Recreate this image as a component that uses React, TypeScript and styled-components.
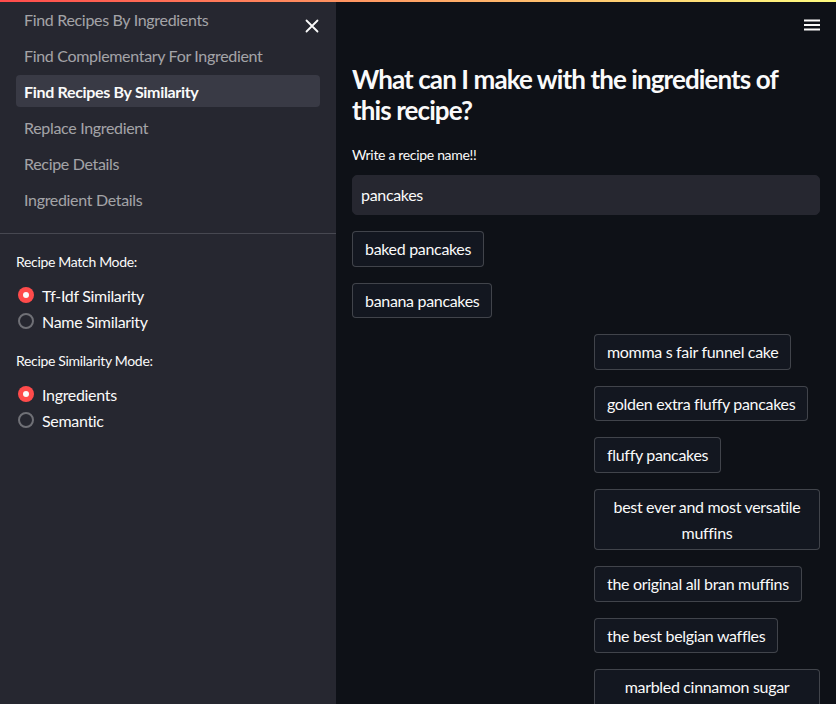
import React from "react";
import styled, { createGlobalStyle } from "styled-components";

const GlobalStyle = createGlobalStyle`
  html, body {
    margin: 0;
    padding: 0;
    background: #0e1117;
    font-family: "Source Sans Pro", Lato, "Noto Sans", sans-serif;
    letter-spacing: -0.02em;
    color: #fafafa;
  }
  * { box-sizing: border-box; }
`;

const Shell = styled.div`
  position: relative;
  height: 100vh;
  display: grid;
  grid-template-columns: 336px 1fr;
  overflow: hidden;
`;

const Decoration = styled.div`
  position: absolute;
  top: 0;
  left: 0;
  right: 0;
  height: 2px;
  background: linear-gradient(90deg, rgb(255, 75, 75), rgb(255, 253, 128));
  z-index: 5;
`;

const Sidebar = styled.aside`
  position: relative;
  background: #262730;
  height: 100%;
`;

const CloseButton = styled.button`
  position: absolute;
  top: 18px;
  right: 16px;
  width: 16px;
  height: 16px;
  padding: 0;
  border: none;
  background: none;
  color: #fafafa;
  display: flex;
  align-items: center;
  justify-content: center;
`;

const Nav = styled.nav`
  display: flex;
  flex-direction: column;
  gap: 4px;
  padding: 3px 16px 18px;
  border-bottom: 1px solid #474851;
`;

const NavItem = styled.a<{ active?: boolean }>`
  display: flex;
  align-items: center;
  height: 32px;
  padding: 0 8px;
  border-radius: 4px;
  font-size: 16px;
  font-weight: ${({ active }) => (active ? 700 : 400)};
  color: ${({ active }) => (active ? "#fafafa" : "rgba(250, 250, 250, 0.6)")};
  background: ${({ active }) => (active ? "#393a45" : "transparent")};
  text-decoration: none;
`;

const SideBody = styled.div`
  padding: 17px 16px 0;
`;

const GroupLabel = styled.div`
  font-size: 14px;
  line-height: 21px;
  margin-bottom: 10px;
`;

const RadioGroup = styled.div`
  display: flex;
  flex-direction: column;
  margin-bottom: 16px;
`;

const RadioRow = styled.label`
  display: flex;
  align-items: center;
  gap: 8px;
  height: 26px;
  font-size: 16px;
  padding-left: 2px;
`;

const RadioDot = styled.span<{ checked?: boolean }>`
  width: 16px;
  height: 16px;
  border-radius: 50%;
  flex: none;
  display: flex;
  align-items: center;
  justify-content: center;
  background: ${({ checked }) => (checked ? "#ff4b4b" : "transparent")};
  border: ${({ checked }) =>
    checked ? "none" : "2px solid rgba(250, 250, 250, 0.35)"};

  &::after {
    content: "";
    display: ${({ checked }) => (checked ? "block" : "none")};
    width: 6px;
    height: 6px;
    border-radius: 50%;
    background: #fafafa;
  }
`;

const Main = styled.main`
  position: relative;
  height: 100%;
  overflow: hidden;
  padding: 64px 16px 0;
`;

const MenuButton = styled.button`
  position: absolute;
  top: 17px;
  right: 16px;
  width: 16px;
  height: 16px;
  padding: 0;
  border: none;
  background: none;
  color: #fafafa;
`;

const Heading = styled.h3`
  margin: 0 0 18px;
  font-size: 26px;
  line-height: 31px;
  font-weight: 700;
  letter-spacing: -0.035em;
`;

const FieldLabel = styled.label`
  display: block;
  font-size: 14px;
  line-height: 21px;
  margin-bottom: 10px;
`;

const TextInput = styled.input`
  display: block;
  width: 100%;
  height: 40px;
  padding: 0 8px 2px;
  border: 1px solid #262730;
  border-radius: 5px;
  background: #262730;
  color: #fafafa;
  font-family: inherit;
  letter-spacing: inherit;
  font-size: 16px;
  outline: none;
  margin-bottom: 16px;
`;

const Stack = styled.div`
  display: flex;
  flex-direction: column;
  align-items: flex-start;
  gap: 16px;
`;

const Columns = styled.div`
  display: grid;
  grid-template-columns: 1fr 1fr;
  gap: 16px;
  margin-top: 16px;
`;

const ResultButton = styled.button`
  max-width: 100%;
  padding: 4px 12px;
  border: 1px solid rgba(250, 250, 250, 0.2);
  border-radius: 4px;
  background: rgb(19, 23, 32);
  color: #fafafa;
  font-family: inherit;
  letter-spacing: inherit;
  font-size: 16px;
  line-height: 1.6;
  text-align: center;
`;

const navItems = [
  "Find Recipes By Ingredients",
  "Find Complementary For Ingredient",
  "Find Recipes By Similarity",
  "Replace Ingredient",
  "Recipe Details",
  "Ingredient Details",
];

const topResults = ["baked pancakes", "banana pancakes"];

const columnResults = [
  "momma s fair funnel cake",
  "golden extra fluffy pancakes",
  "fluffy pancakes",
  "best ever and most versatile muffins",
  "the original all bran muffins",
  "the best belgian waffles",
  "marbled cinnamon sugar pancakes",
];

const Radio = ({ label, checked }: { label: string; checked?: boolean }) => (
  <RadioRow>
    <RadioDot checked={checked} />
    {label}
  </RadioRow>
);

export default function App() {
  return (
    <>
      <GlobalStyle />
      <Shell>
        <Decoration />
        <Sidebar>
          <CloseButton aria-label="Close sidebar">
            <svg width="14" height="14" viewBox="0 0 14 14">
              <path
                d="M1.5 1.5 L12.5 12.5 M12.5 1.5 L1.5 12.5"
                stroke="currentColor"
                strokeWidth="1.8"
                strokeLinecap="round"
              />
            </svg>
          </CloseButton>
          <Nav>
            {navItems.map((item) => (
              <NavItem key={item} active={item === "Find Recipes By Similarity"}>
                {item}
              </NavItem>
            ))}
          </Nav>
          <SideBody>
            <GroupLabel>Recipe Match Mode:</GroupLabel>
            <RadioGroup>
              <Radio label="Tf-Idf Similarity" checked />
              <Radio label="Name Similarity" />
            </RadioGroup>
            <GroupLabel>Recipe Similarity Mode:</GroupLabel>
            <RadioGroup>
              <Radio label="Ingredients" checked />
              <Radio label="Semantic" />
            </RadioGroup>
          </SideBody>
        </Sidebar>
        <Main>
          <MenuButton aria-label="Menu">
            <svg width="16" height="16" viewBox="0 0 16 16">
              <path d="M0 3.5 H16 M0 8 H16 M0 12.5 H16" stroke="currentColor" strokeWidth="2" />
            </svg>
          </MenuButton>
          <Heading>What can I make with the ingredients of this recipe?</Heading>
          <FieldLabel htmlFor="recipe">Write a recipe name!!</FieldLabel>
          <TextInput id="recipe" defaultValue="pancakes" />
          <Stack>
            {topResults.map((r) => (
              <ResultButton key={r}>{r}</ResultButton>
            ))}
          </Stack>
          <Columns>
            <div />
            <Stack>
              {columnResults.map((r) => (
                <ResultButton key={r}>{r}</ResultButton>
              ))}
            </Stack>
          </Columns>
        </Main>
      </Shell>
    </>
  );
}
